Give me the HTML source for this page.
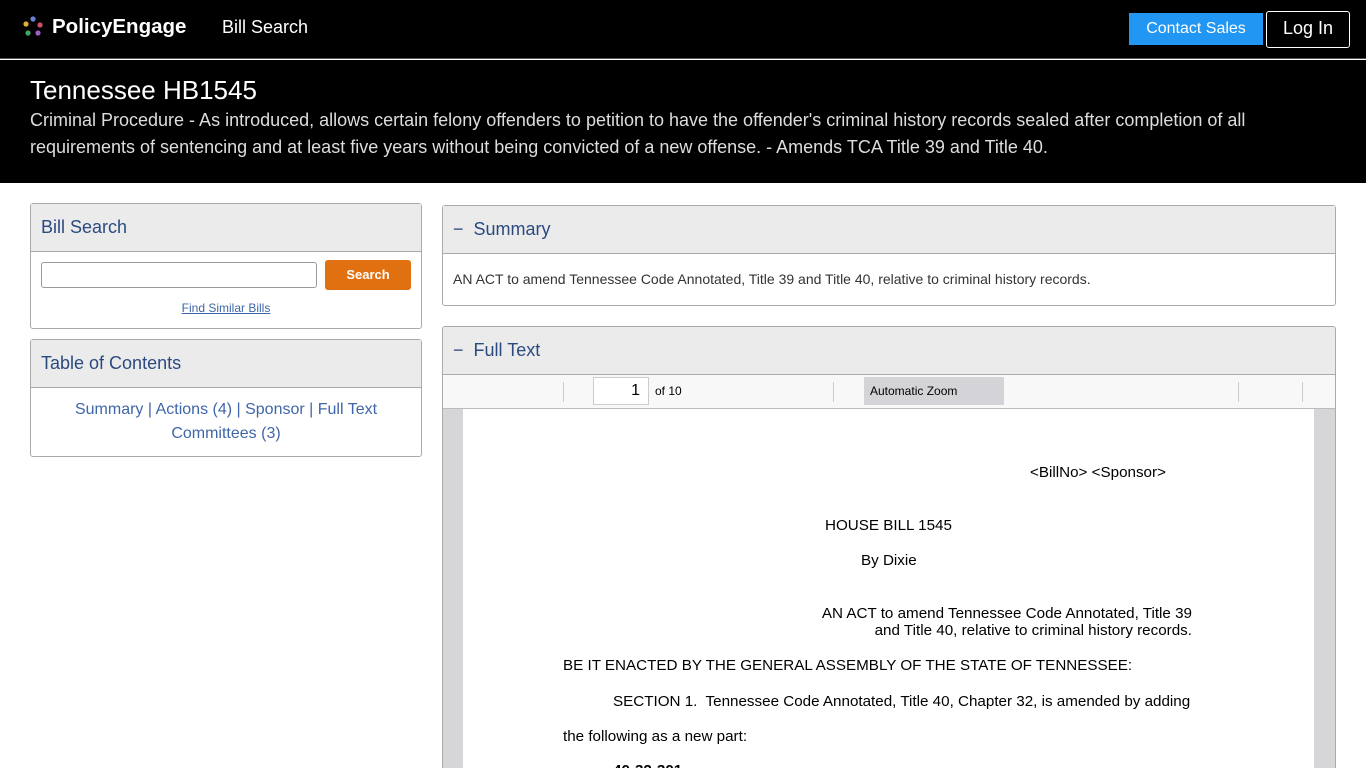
<!DOCTYPE html>
<html style="height:768px;overflow:hidden"><head><meta charset="utf-8"><style>
*{box-sizing:border-box;margin:0;padding:0}
body{width:1366px;height:768px;overflow:hidden;background:#fff;font-family:"Liberation Sans",Arial,sans-serif;position:relative}
.nav{position:absolute;left:0;top:0;width:1366px;height:59px;background:#000;border-bottom:1px solid #555}
.hero{position:absolute;left:0;top:60px;width:1366px;height:123px;background:#000;color:#fff}
.abs{position:absolute}
.panel{position:absolute;border:1px solid #aaa;border-radius:3px;background:#fff}
.ph{background:#ebebeb;border-bottom:1px solid #aaa;color:#2a4a80;font-size:18px}
a{color:#3f66a8;text-decoration:none}
</style></head><body>
<div class="nav">
 <svg class="abs" style="left:22px;top:16px" width="22" height="22" viewBox="0 0 22 22">
  <circle cx="11" cy="3" r="2.6" fill="#6a7fd6"/><circle cx="4" cy="8" r="2.6" fill="#e0b030"/><circle cx="18" cy="9" r="2.6" fill="#d04f6a"/><circle cx="6" cy="17" r="2.6" fill="#3fa864"/><circle cx="16" cy="17" r="2.6" fill="#9a5fc8"/></svg>
 <div class="abs" style="left:52px;top:15px;color:#fff;font-size:20.5px;font-weight:bold">PolicyEngage</div>
 <div class="abs" style="left:222px;top:17px;color:#fff;font-size:18px">Bill Search</div>
 <div class="abs" style="left:1129px;top:13px;width:134px;height:32px;background:#2196f3;color:#fff;font-size:16px;text-align:center;line-height:32px">Contact Sales</div>
 <div class="abs" style="left:1266px;top:11px;width:84px;height:37px;border:1px solid #fff;border-radius:3px;color:#fff;font-size:18px;text-align:center;line-height:32px">Log In</div>
</div>
<div class="hero">
 <div class="abs" style="left:30px;top:15px;font-size:26px">Tennessee HB1545</div>
 <div class="abs" style="left:30px;top:47px;width:1290px;font-size:18px;line-height:27px;color:#ddd">Criminal Procedure - As introduced, allows certain felony offenders to petition to have the offender's criminal history records sealed after completion of all requirements of sentencing and at least five years without being convicted of a new offense. - Amends TCA Title 39 and Title 40.</div>
</div>

<div class="panel" style="left:30px;top:203px;width:392px;height:126px">
 <div class="ph" style="height:48px;padding:13px 10px">Bill Search</div>
 <div class="abs" style="left:10px;top:58px;width:276px;height:26px;border:1px solid #999;border-radius:3px"></div>
 <div class="abs" style="left:294px;top:56px;width:86px;height:30px;background:#e07010;border-radius:3px;color:#fff;font-weight:bold;font-size:13px;text-align:center;line-height:30px">Search</div>
 <div class="abs" style="left:0;top:97px;width:390px;text-align:center;font-size:12px"><a style="text-decoration:underline">Find Similar Bills</a></div>
</div>
<div class="panel" style="left:30px;top:339px;width:392px;height:118px">
 <div class="ph" style="height:48px;padding:13px 10px">Table of Contents</div>
 <div style="text-align:center;font-size:16px;line-height:24px;padding-top:10px;color:#3f66a8"><a>Summary</a> | <a>Actions (4)</a> | <a>Sponsor</a> | <a>Full Text</a><br><a>Committees (3)</a></div>
</div>

<div class="panel" style="left:442px;top:205px;width:894px;height:101px">
 <div class="ph" style="height:48px;padding:13px 10px">−&nbsp; Summary</div>
 <div style="padding:17px 10px;font-size:14px;color:#333">AN ACT to amend Tennessee Code Annotated, Title 39 and Title 40, relative to criminal history records.</div>
</div>
<div class="panel" style="left:442px;top:326px;width:894px;height:442px;overflow:hidden;border-bottom:none;border-radius:3px 3px 0 0">
 <div class="ph" style="height:48px;padding:13px 10px">−&nbsp; Full Text</div>
 <div class="abs" style="left:0;top:48px;width:892px;height:34px;background:#f8f8f8;border-bottom:1px solid #bbb">
  <div class="abs" style="left:120px;top:7px;width:1px;height:20px;background:#ccc"></div>
  <div class="abs" style="left:150px;top:2px;width:56px;height:28px;background:#fff;border:1px solid #ccc;font-size:16px;text-align:right;padding:4px 8px">1</div>
  <div class="abs" style="left:212px;top:9px;font-size:12px">of 10</div>
  <div class="abs" style="left:390px;top:7px;width:1px;height:20px;background:#ccc"></div>
  <div class="abs" style="left:421px;top:2px;width:140px;height:28px;background:#d4d4d8;font-size:12px;padding:7px 6px">Automatic Zoom</div>
  <div class="abs" style="left:795px;top:7px;width:1px;height:20px;background:#ccc"></div>
  <div class="abs" style="left:859px;top:7px;width:1px;height:20px;background:#ccc"></div>
 </div>
 <div class="abs" style="left:0;top:82px;width:892px;height:360px;background:#d6d6d8;overflow:hidden">
  <div class="abs" style="left:20px;top:0;width:851px;height:360px;background:#fff;font-size:15.2px;color:#000">
   <div class="abs" style="left:567px;top:55px">&lt;BillNo&gt; &lt;Sponsor&gt;</div>
   <div class="abs" style="left:362px;top:108px">HOUSE BILL 1545</div>
   <div class="abs" style="left:398px;top:143px">By Dixie</div>
   <div class="abs" style="left:330px;top:196px;width:399px;text-align:right;line-height:17px">AN ACT to amend Tennessee Code Annotated, Title 39<br>and Title 40, relative to criminal history records.</div>
   <div class="abs" style="left:100px;top:248px">BE IT ENACTED BY THE GENERAL ASSEMBLY OF THE STATE OF TENNESSEE:</div>
   <div class="abs" style="left:150px;top:284px">SECTION 1.&nbsp; Tennessee Code Annotated, Title 40, Chapter 32, is amended by adding</div>
   <div class="abs" style="left:100px;top:319px">the following as a new part:</div>
   <div class="abs" style="left:150px;top:353px;font-weight:bold">40-32-301.</div>
  </div>
 </div>
</div>
</body></html>
